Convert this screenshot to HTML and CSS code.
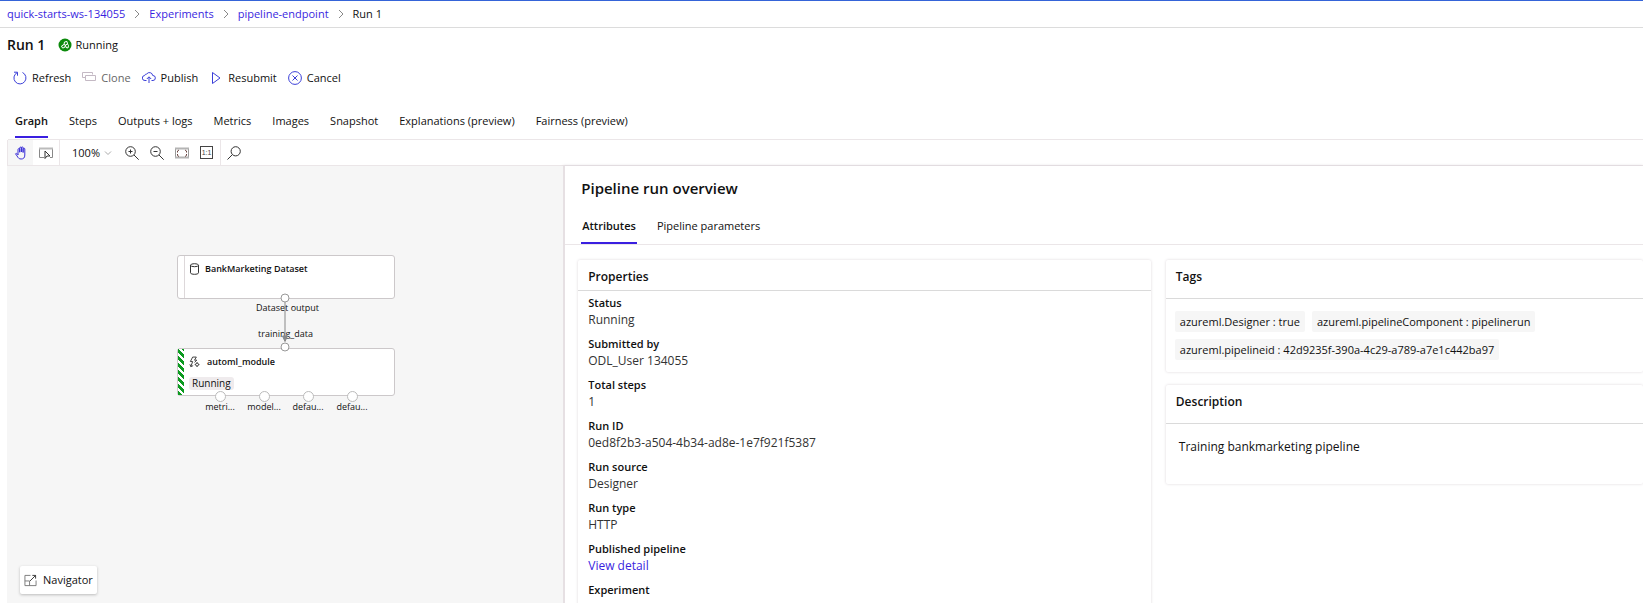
FILE: index.html
```html
<!DOCTYPE html>
<html lang="en">
<head>
<meta charset="utf-8">
<title>Run 1</title>
<link rel="stylesheet" href="styles.css">
</head>
<body>
<nav class="breadcrumb" aria-label="Breadcrumb">
  <a href="#">quick-starts-ws-134055</a>
  <svg class="chevron" viewBox="0 0 6 10"><path d="M1 1l4 4-4 4"/></svg>
  <a href="#">Experiments</a>
  <svg class="chevron" viewBox="0 0 6 10"><path d="M1 1l4 4-4 4"/></svg>
  <a href="#">pipeline-endpoint</a>
  <svg class="chevron" viewBox="0 0 6 10"><path d="M1 1l4 4-4 4"/></svg>
  <span>Run 1</span>
</nav>
<header class="run-header">
  <h1>Run 1</h1>
  <svg class="status-icon" viewBox="0 0 14 14"><circle cx="7" cy="7" r="6.500" fill="#0b8a0b"/><g fill="none" stroke="#fff" stroke-width="1"><path d="M6 6.500L6.500 4 9 3.500 9.500 6l-2 1zM6 6.500L3.500 8l1 2 2-.5L7.500 7M7.500 7L8 9.500l2 .5.500-2.500-1-1.500"/></g></svg>
  <span>Running</span>
</header>
<div class="commands">
  <button type="button"><svg viewBox="0 0 14 14"><path d="M9.500 1.500a6 6 0 1 1-5.500.2M1 1.200h3.500v3.500"/></svg>Refresh</button>
  <button type="button" class="muted" disabled><svg viewBox="0 0 14 14"><path d="M3.500 6.500H.5v-5h10v2M3.500 4.500h10v5h-10z"/></svg>Clone</button>
  <button type="button"><svg viewBox="0 0 14 14"><path d="M4.500 9.500H3a2.500 2.500 0 0 1-.3-5 2 2 0 0 1 2-1.500 3.300 3.300 0 0 1 6 1.500 2.500 2.500 0 0 1 .3 5H9.500M7 12V6M4.800 8L7 5.800 9.200 8"/></svg>Publish</button>
  <button type="button"><svg viewBox="0 0 14 14"><path d="M3.500 1.500l7.500 5.500-7.500 5.500z"/></svg>Resubmit</button>
  <button type="button"><svg viewBox="0 0 14 14"><circle cx="7" cy="7" r="6.400"/><path d="M4.500 4.500l5 5M9.500 4.500l-5 5"/></svg>Cancel</button>
</div>
<div class="tabs main-tabs" role="tablist">
  <button type="button" role="tab" aria-selected="true">Graph</button>
  <button type="button" role="tab">Steps</button>
  <button type="button" role="tab">Outputs + logs</button>
  <button type="button" role="tab">Metrics</button>
  <button type="button" role="tab">Images</button>
  <button type="button" role="tab">Snapshot</button>
  <button type="button" role="tab">Explanations (preview)</button>
  <button type="button" role="tab">Fairness (preview)</button>
</div>
<div class="toolbar">
  <div class="tool-group modes">
    <button type="button" class="active" aria-label="Pan"><svg viewBox="0 0 14 14"><path d="M4 9V3.500a.8.800 0 0 1 1.700 0V6.500M5.700 6V2a.8.800 0 0 1 1.700 0v4M7.400 6V1.800a.8.800 0 0 1 1.700 0V6.500M9.100 6.500V3a.8.800 0 0 1 1.700 0v6c0 3-1.500 4-3.700 4-2 0-3-1-4-3L1.500 7.800c.5-.8 1.600-.6 2.500 1"/></svg></button>
    <button type="button" aria-label="Select"><svg viewBox="0 0 14 14"><path d="M5 11.500H.5v-9h13v9H11" stroke="#888"/><path d="M0 2.500h14" stroke="#bbb" stroke-width="2"/><path d="M6 5v7.500l2-2.500h3z"/></svg></button>
  </div>
  <div class="tool-group zooms">
    <button type="button" class="zoom-level">100%<svg viewBox="0 0 8 8"><path d="M1 2.500l3 3 3-3" stroke="#aaa"/></svg></button>
    <button type="button" aria-label="Zoom in"><svg viewBox="0 0 14 14"><circle cx="5.500" cy="5.500" r="4.800"/><path d="M9 9l4.700 4.700M3.500 5.500h4M5.500 3.500v4"/></svg></button>
    <button type="button" aria-label="Zoom out"><svg viewBox="0 0 14 14"><circle cx="5.500" cy="5.500" r="4.800"/><path d="M9 9l4.700 4.700M3.500 5.500h4"/></svg></button>
    <button type="button" aria-label="Fit to screen"><svg viewBox="0 0 14 14"><path d="M.5 2v10M13.500 2v10" stroke="#999"/><path d="M0 2.500h14M0 11.500h14" stroke="#b4b4b4" stroke-width="2"/><path d="M2.500 6.500V5l1.500-1M10 4l1.500 1v1.500M11.500 8v1.500L10 10.500M4 10.500L2.500 9.500V8" stroke="#6a4440"/></svg></button>
    <button type="button" class="actual" aria-label="Actual size"><span>1:1</span></button>
  </div>
  <div class="tool-group">
    <button type="button" aria-label="Search"><svg viewBox="0 0 14 14"><circle cx="8.700" cy="5.300" r="4.600"/><path d="M5.300 8.700L.5 13.500"/></svg></button>
  </div>
</div>
<main class="workspace">
  <section class="canvas" aria-label="Graph">
    <div class="node dataset">
      <div class="node-title"><svg viewBox="0 0 10 12"><ellipse cx="5" cy="2.200" rx="4" ry="1.500"/><path d="M1 2.200v7.600c0 2 8 2 8 0V2.200"/></svg>BankMarketing Dataset</div>
    </div>
    <div class="node module">
      <div class="node-title"><svg viewBox="0 0 12 12"><path d="M4 .6h4L6 4h2.500L6 6.500M4 .6L1.500 5.500H4L2 11M1 8.500L2 11l2.500-1"/><circle cx="8.800" cy="8.800" r="1.600"/><path d="M8.800 6.200v1M8.800 10.400v1M6.200 8.800h1M10.400 8.800h1"/></svg>automl_module</div>
      <span class="badge">Running</span>
    </div>
    <span class="port-label out">Dataset output</span>
    <span class="port-label in">training_data</span>
    <svg class="edge" viewBox="0 0 14 60"><path d="M7 9v36" stroke="#888"/><path d="M4.500 44h5L7 49.500z" fill="#888" stroke="#888"/><circle cx="7" cy="6" r="4"/><circle cx="7" cy="55" r="4"/></svg>
    <div class="outputs">
      <span>metri...</span><span>model...</span><span>defau...</span><span>defau...</span>
    </div>
    <button type="button" class="navigator"><svg viewBox="0 0 14 14"><path d="M7 1.500H1v11h12V7" stroke="#777"/><path d="M1 7.500h5v5" stroke="#777"/><path d="M6.500 7.500L12.500 1.500M9 1.500h3.500V5"/></svg>Navigator</button>
  </section>
  <section class="panel">
    <h2>Pipeline run overview</h2>
    <div class="tabs panel-tabs" role="tablist">
      <button type="button" role="tab" aria-selected="true">Attributes</button>
      <button type="button" role="tab">Pipeline parameters</button>
    </div>
    <div class="cards">
      <article class="card properties">
        <h3>Properties</h3>
        <dl>
          <div><dt>Status</dt><dd>Running</dd></div>
          <div><dt>Submitted by</dt><dd>ODL_User 134055</dd></div>
          <div><dt>Total steps</dt><dd>1</dd></div>
          <div><dt>Run ID</dt><dd>0ed8f2b3-a504-4b34-ad8e-1e7f921f5387</dd></div>
          <div><dt>Run source</dt><dd>Designer</dd></div>
          <div><dt>Run type</dt><dd>HTTP</dd></div>
          <div><dt>Published pipeline</dt><dd><a href="#">View detail</a></dd></div>
          <div><dt>Experiment</dt></div>
        </dl>
      </article>
      <div class="side">
        <article class="card">
          <h3>Tags</h3>
          <div class="chips"><span>azureml.Designer : true</span><span>azureml.pipelineComponent : pipelinerun</span><span>azureml.pipelineid : 42d9235f-390a-4c29-a789-a7e1c442ba97</span></div>
        </article>
        <article class="card">
          <h3>Description</h3>
          <p>Training bankmarketing pipeline</p>
        </article>
      </div>
    </div>
  </section>
</main>
</body>
</html>
```
FILE: styles.css
```css
* { box-sizing: border-box; }
body {
  margin: 0;
  height: 100vh;
  display: flex;
  flex-direction: column;
  overflow: hidden;
  border-top: 1px solid #3564d8;
  background: #fff;
  color: #111;
  font: 11px/16px "Open Sans", "Noto Sans", sans-serif;
}
h1, h2, h3, p, dl, dd { margin: 0; }
a { color: #3a1fe0; text-decoration: none; }
button {
  padding: 0;
  border: 0;
  background: none;
  color: inherit;
  font: inherit;
  white-space: nowrap;
}
svg { flex: none; fill: none; stroke: #333; }

.breadcrumb {
  display: flex;
  align-items: center;
  gap: 9px;
  height: 27px;
  padding-left: 7px;
  border-bottom: 1px solid #dcdcdc;
}
.chevron { width: 6px; height: 10px; stroke: #888; }

.run-header {
  display: flex;
  align-items: center;
  height: 34px;
  padding-left: 7px;
}
.run-header h1 { font-size: 14px; font-weight: 600; margin-right: 13px; }
.status-icon { width: 14px; height: 14px; margin-right: 3px; stroke: none; }

.commands {
  display: flex;
  align-items: center;
  gap: 11px;
  height: 32px;
  padding-left: 13px;
}
.commands button { display: flex; align-items: center; gap: 5px; }
.commands svg { width: 14px; height: 14px; stroke: #3b3fd8; }
.commands .muted { color: #666; }
.commands .muted svg { stroke: #c4b9c4; }

.tabs { display: flex; border-bottom: 1px solid #ebe6e8; }
.tabs button { border-bottom: 2px solid transparent; }
.tabs [aria-selected="true"] { border-bottom-color: #3a1fe0; font-weight: 600; }
.main-tabs {
  gap: 21px;
  height: 46px;
  padding: 11px 0 1px 7px;
  margin-left: 8px;
}

.toolbar {
  display: flex;
  height: 26px;
  margin-left: 7px;
  border-left: 1px solid #ebe6e8;
  border-bottom: 1px solid #ebe6e8;
}
.tool-group { display: flex; align-items: center; }
.tool-group + .tool-group { border-left: 1px solid #ebe6e8; }
.tool-group button {
  display: flex;
  align-items: center;
  justify-content: center;
  width: 25px;
  height: 25px;
}
.tool-group svg { width: 14px; height: 14px; }
.tool-group .active { background: #f6f6f6; }
.tool-group .active svg { stroke: #3b2fd8; }
.modes, .zooms { padding-right: 1px; }
.zooms { padding-left: 7px; }
.tool-group .zoom-level { width: 50px; gap: 4px; margin-right: 2px; }
.tool-group .zoom-level svg { width: 8px; height: 8px; }
.actual span {
  width: 13px;
  height: 13px;
  border: 1px solid #444;
  color: #444;
  font: 7px/11px "Liberation Sans", sans-serif;
}

.workspace { flex: 1; min-height: 0; display: flex; margin-left: 7px; }
.canvas { position: relative; flex: 0 0 34%; background: #f6f6f6; overflow: hidden; }
.node {
  position: absolute;
  left: 170px;
  width: 218px;
  padding-left: 11px;
  border: 1px solid #ccc8ca;
  border-radius: 3px;
  background: #fff;
}
.node::before {
  content: "";
  position: absolute;
  inset: 0 auto 0 0;
  width: 6px;
  border-right: 1px solid #ddd8da;
}
.dataset { top: 89px; height: 44px; }
.module { top: 182px; height: 48px; }
.module::before {
  border: 0;
  background: repeating-linear-gradient(45deg, #0c9a20 0 3px, #fff 3px 5px);
}
.node-title {
  display: flex;
  align-items: center;
  gap: 5px;
  height: 26px;
  font-size: 9px;
  font-weight: 600;
}
.module .node-title { gap: 7px; }
.node-title svg { width: 11px; height: 12px; }
.badge {
  display: block;
  width: max-content;
  margin-top: 2px;
  padding: 0 3px;
  border-radius: 3px;
  background: #efebed;
  font-size: 10px;
  line-height: 13px;
}
.port-label { position: absolute; font-size: 9px; line-height: 12px; }
.out { left: 249px; top: 136px; }
.in { left: 251px; top: 162px; }
.edge { position: absolute; left: 271px; top: 126px; width: 14px; height: 60px; }
.edge circle { fill: #fff; stroke: #999; }
.outputs {
  position: absolute;
  left: 191px;
  top: 225px;
  display: grid;
  grid-template-columns: repeat(4, 44px);
  font-size: 9px;
  line-height: 9px;
  text-align: center;
}
.outputs span::before {
  content: "";
  display: block;
  width: 9px;
  height: 9px;
  margin: 0 auto;
  border: 1px solid #bbb;
  border-radius: 50%;
  background: #fff;
}
.navigator {
  position: absolute;
  left: 13px;
  bottom: 9px;
  display: flex;
  align-items: center;
  gap: 6px;
  height: 28px;
  padding: 0 4px;
  border-radius: 2px;
  background: #fff;
  box-shadow: 0 1px 3px #bbb;
}
.navigator svg { width: 13px; height: 13px; }

.panel {
  flex: 1;
  min-width: 0;
  padding-top: 10px;
  border-left: 2px solid #e6e0e3;
  background: #fff;
  box-shadow: 0 0 3px #d5ced2;
  overflow: hidden;
}
.panel h2 { padding-left: 16px; font-size: 15px; font-weight: 600; line-height: 24px; }
.panel-tabs { gap: 19px; height: 45px; padding: 10px 0 0 16px; }
.panel-tabs button { padding: 0 1px; }
.cards {
  display: grid;
  grid-template-columns: 6fr 5fr;
  gap: 15px;
  padding: 15px 0 0 13px;
}
.card { background: #fff; border-radius: 2px; box-shadow: 0 0 3px #dcd6da; }
.card h3 {
  padding: 8px 10px 13px;
  border-bottom: 1px solid #dadada;
  font-size: 12px;
  font-weight: 600;
  line-height: 17px;
}
.properties h3 { padding-bottom: 5px; }
dl { display: grid; gap: 7px; padding: 4px 10px 12px; }
dt { font-weight: 600; line-height: 16px; }
dd { color: #333; font-size: 12px; line-height: 18px; }
.side { display: flex; flex-direction: column; gap: 13px; min-width: 0; }
.chips { display: flex; flex-wrap: wrap; gap: 7px; padding: 12px 9px 12px; }
.chips span { padding: 3px 5px 2px; border-radius: 2px; background: #f6f6f6; }
.card p { padding: 14px 13px 28px; font-size: 12px; line-height: 18px; }
```
